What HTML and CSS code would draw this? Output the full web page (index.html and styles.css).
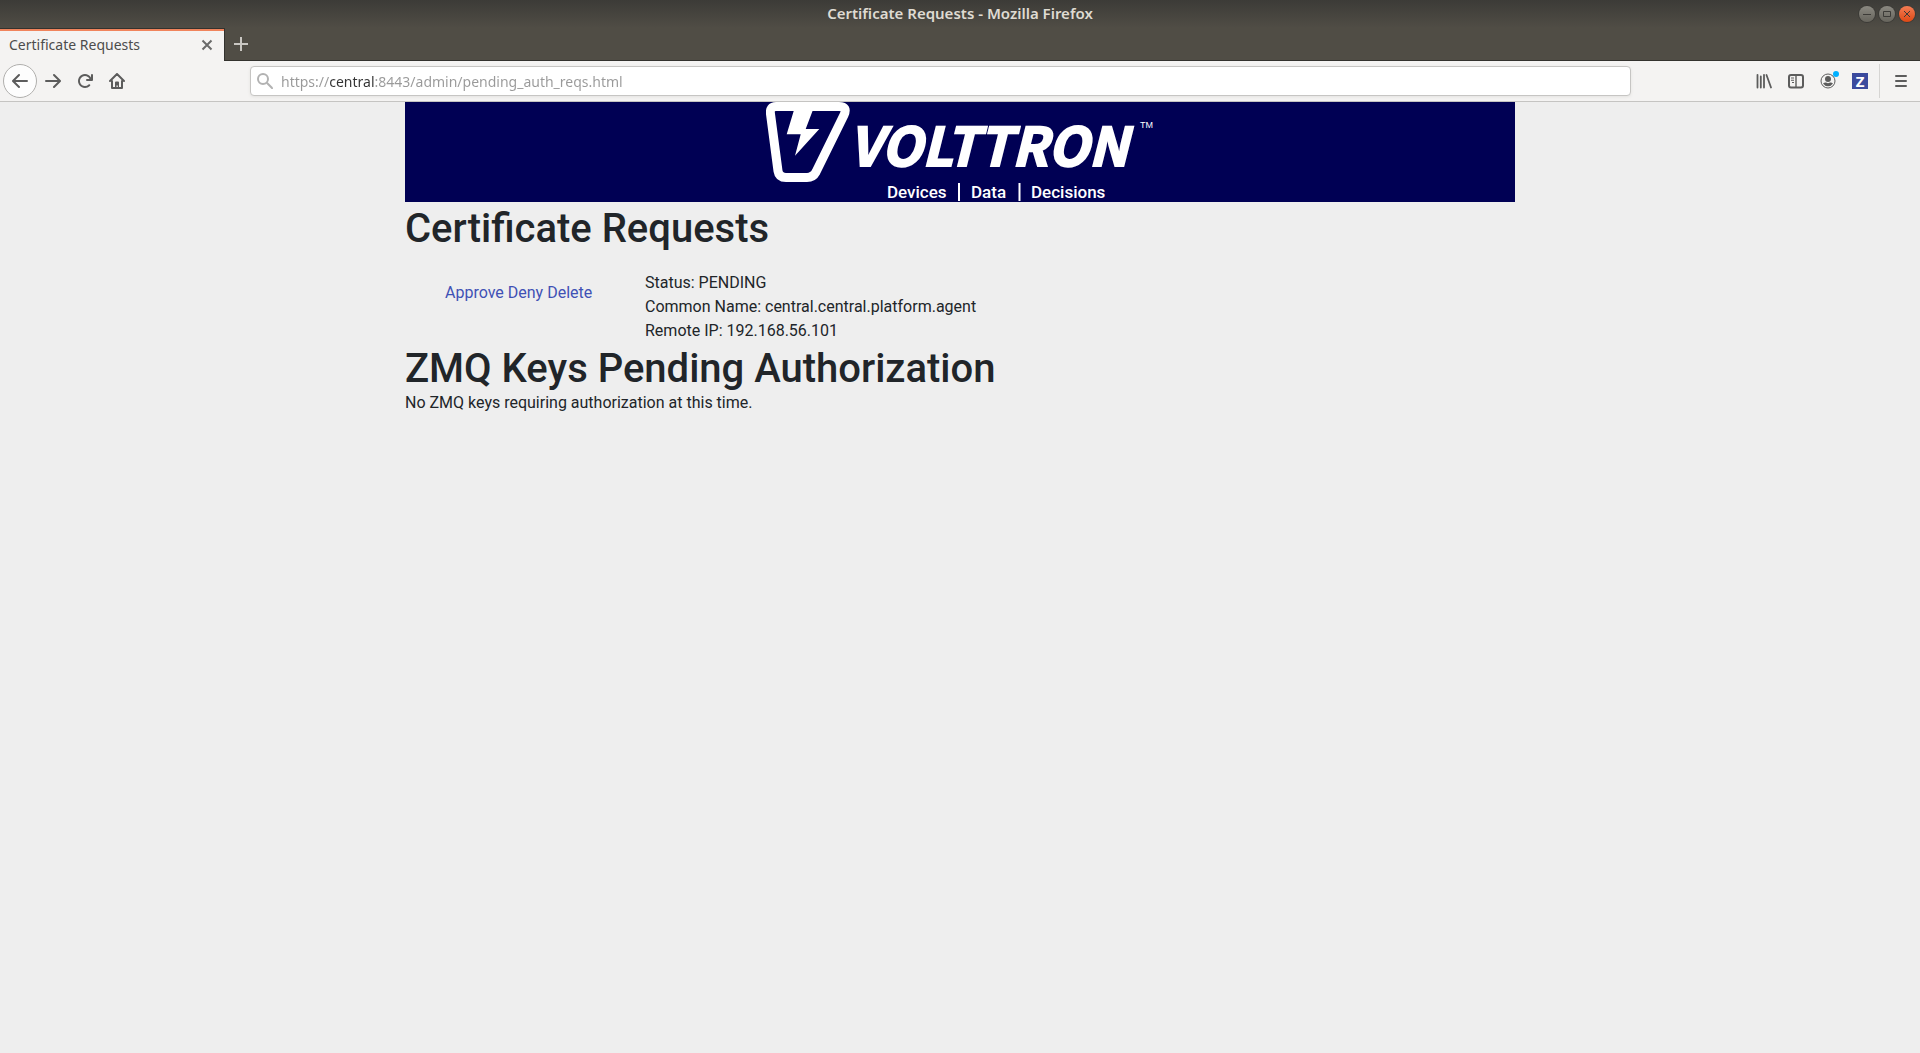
FILE: index.html
```html
<!DOCTYPE html>
<html lang="en">
<head>
<meta charset="utf-8">
<title>Certificate Requests</title>
<link rel="stylesheet" href="styles.css">
</head>
<body>
<header class="browser">
  <div class="titlebar">
    <span class="window-title">Certificate Requests - Mozilla Firefox</span>
    <div class="window-controls">
      <button class="control" aria-label="Minimize"><svg viewBox="0 0 16 16"><path d="M4 8.5h8"/></svg></button>
      <button class="control" aria-label="Maximize"><svg viewBox="0 0 16 16"><path d="M4.5 5.5h7v5h-7z"/></svg></button>
      <button class="control control-close" aria-label="Close window"><svg viewBox="0 0 16 16"><path d="M5 5l6 6M11 5l-6 6"/></svg></button>
    </div>
  </div>
  <div class="tabstrip">
    <div class="tab">
      <span class="tab-label">Certificate Requests</span>
      <button class="tab-close" aria-label="Close tab"><svg viewBox="0 0 16 16"><path d="M3.500 3.500l9 9M12.500 3.500l-9 9"/></svg></button>
    </div>
    <button class="tab-new" aria-label="New tab"><svg viewBox="0 0 14 14"><path d="M7 0v14M0 7h14"/></svg></button>
  </div>
  <nav class="toolbar" aria-label="Navigation">
    <div class="nav-buttons">
      <button class="tool tool-back" aria-label="Back"><svg class="icon" viewBox="0 0 16 16"><path d="M15 7H3.414l4.293-4.293a1 1 0 0 0-1.414-1.414l-6 6a1 1 0 0 0 0 1.414l6 6a1 1 0 0 0 1.414-1.414L3.414 9H15a1 1 0 0 0 0-2z"/></svg></button>
      <button class="tool" aria-label="Forward"><svg class="icon" viewBox="0 0 16 16"><path d="M15.707 7.293l-6-6a1 1 0 0 0-1.414 1.414L12.586 7H1a1 1 0 0 0 0 2h11.586l-4.293 4.293a1 1 0 1 0 1.414 1.414l6-6a1 1 0 0 0 0-1.414z"/></svg></button>
      <button class="tool" aria-label="Reload"><svg class="icon" viewBox="0 0 16 16"><path d="M15 1a1 1 0 0 0-1 1v2.418A6.995 6.995 0 1 0 8 15a6.954 6.954 0 0 0 4.950-2.050 1 1 0 0 0-1.414-1.414A5.019 5.019 0 1 1 12.549 6H10a1 1 0 0 0 0 2h5a1 1 0 0 0 1-1V2a1 1 0 0 0-1-1z"/></svg></button>
      <button class="tool" aria-label="Home"><svg class="icon" viewBox="0 0 16 16"><path fill="none" stroke="currentColor" stroke-width="2" stroke-linejoin="round" stroke-linecap="round" d="M1 8l7-7 7 7M3 8v7h10V8"/><path d="M6 15V9.500a1 1 0 0 1 1-1h2a1 1 0 0 1 1 1V15H8.800v-2.500H7.500V15z"/></svg></button>
    </div>
    <div class="urlbar">
      <svg class="search-icon" viewBox="0 0 16 16"><circle cx="6" cy="6" r="5"/><path d="M9.800 9.800l6 6"/></svg>
      <input class="url" type="text" aria-label="Address" value="https://central:8443/admin/pending_auth_reqs.html">
    </div>
    <div class="tool-buttons">
      <button class="tool" aria-label="Library"><svg class="icon" viewBox="0 0 16 16"><path fill="none" stroke="currentColor" stroke-width="1.800" stroke-linecap="round" d="M1.500 1.800v12.700M4.800 3.500v11M8 1.800v12.700M10.500 2l4.500 12.500"/></svg></button>
      <button class="tool" aria-label="Sidebars"><svg class="icon" viewBox="0 0 16 16"><rect x="1" y="2" width="14" height="12.500" rx="2" fill="none" stroke="currentColor" stroke-width="2"/><path d="M7.300 2h1.400v12H7.300zM3 4.500h3v1H3zM3 6.700h3v1H3zM4 9h2v1H4z"/></svg></button>
      <button class="tool tool-account" aria-label="Account"><svg class="icon" viewBox="0 0 16 16"><circle cx="8" cy="8" r="7" fill="none" stroke="currentColor" stroke-width="1"/><circle cx="8" cy="6" r="3"/><path d="M3 10.500q1.500-1.300 3-1l2 .7 2-.7q1.500-.3 3 1-1.800 2.700-5 2.700t-5-2.700z"/></svg></button>
      <button class="tool" aria-label="Zotero"><span class="zotero">Z</span></button>
    </div>
    <div class="menu"><button class="tool" aria-label="Open menu"><svg class="icon" viewBox="0 0 16 16"><path fill="none" stroke="currentColor" stroke-width="2" stroke-linecap="round" d="M3 3h10M3 8h10M3 13h10"/></svg></button></div>
  </nav>
</header>
<main class="container">
  <div class="banner">
    <svg class="logo" viewBox="0 0 388 100" role="img" aria-label="VOLTTRON">
      <path class="emblem" d="M10 4.500H73Q82 4.500 78 13L50 70Q47 75.500 41 75.500H20Q13 75.500 12 69L4.500 12Q3.500 4.500 10 4.500Z"/>
      <path class="bolt" d="M28.300 7H47.300L39.700 27H53.300L29 53.700L34.700 32.300H20.700Z"/>
      <text class="wordmark" x="83" y="64">VOLTTRON</text>
      <text class="trademark" x="374" y="26">TM</text>
      <path class="divider" d="M193 81v18M253.500 81v18"/>
      <text class="tagline" x="121" y="96">Devices</text>
      <text class="tagline" x="205" y="96">Data</text>
      <text class="tagline" x="265" y="96">Decisions</text>
    </svg>
  </div>
  <h1 class="heading">Certificate Requests</h1>
  <section class="request">
    <div class="actions"><a href="#approve">Approve</a> <a href="#deny">Deny</a> <a href="#delete">Delete</a></div>
    <div class="details">
      <div>Status: PENDING</div>
      <div>Common Name: central.central.platform.agent</div>
      <div>Remote IP: 192.168.56.101</div>
    </div>
  </section>
  <h1 class="heading">ZMQ Keys Pending Authorization</h1>
  <p class="note">No ZMQ keys requiring authorization at this time.</p>
</main>
</body>
</html>
```
FILE: styles.css
```css
* { box-sizing: border-box; }

body {
  margin: 0;
  min-height: 100vh;
  background: #eeeeee;
  color: #212529;
  font: 16px/24px Roboto, sans-serif;
}

button {
  padding: 0;
  border: 0;
  background: none;
  color: inherit;
  display: flex;
  align-items: center;
  justify-content: center;
}

svg { display: block; }

/* Browser window */
.browser {
  font-family: "Noto Sans", sans-serif;
  background: linear-gradient(#3c3b37, #504d45 28px);
}

.titlebar {
  display: grid;
  grid-template-columns: 1fr auto 1fr;
  align-items: center;
  height: 28px;
}

.window-title {
  grid-column: 2;
  padding-bottom: 2px;
  color: #dfdbd2;
  font-size: 15px;
  font-weight: 600;
  line-height: 26px;
}

.window-controls {
  display: flex;
  justify-content: flex-end;
  gap: 4px;
  padding-right: 5px;
}

.control {
  width: 16px;
  height: 16px;
  border-radius: 50%;
  background: linear-gradient(#8b8981, #66645c);
  box-shadow: 0 0 0 1px #3c3b37;
}

.control svg {
  width: 16px;
  height: 16px;
  fill: none;
  stroke: #3c3b37;
}

.control-close { background: linear-gradient(#f47d54, #dd4814); }

.tabstrip {
  display: flex;
  height: 33px;
  border-bottom: 1px solid #33322e;
}

.tab {
  display: flex;
  align-items: center;
  justify-content: space-between;
  width: 225px;
  height: 33px;
  padding: 0 9px;
  background: #f4f3f2;
  border-top: 1px solid #33322e;
  border-right: 1px solid #33322e;
  box-shadow: inset 0 2px #f0845c;
}

.tab-label {
  color: #4c4c4c;
  font-size: 14px;
  line-height: 20px;
}

.tab-close svg {
  width: 16px;
  height: 16px;
  fill: none;
  stroke: #6a6a6a;
  stroke-width: 2;
}

.tab-new { width: 32px; }

.tab-new svg {
  width: 14px;
  height: 14px;
  stroke: #c9c7c2;
  stroke-width: 2;
}

.toolbar {
  display: flex;
  align-items: center;
  height: 41px;
  background: #f4f3f2;
  border-bottom: 1px solid #c5c4c2;
}

.nav-buttons {
  display: flex;
  align-items: center;
  flex: 0 0 250px;
  padding-left: 3px;
}

.tool {
  width: 32px;
  height: 32px;
  color: #5c5c5c;
}

.icon {
  width: 16px;
  height: 16px;
  fill: currentColor;
}

.tool-back {
  width: 34px;
  height: 34px;
  border: 1px solid #b0afad;
  border-radius: 50%;
  background: #fdfdfd;
}

.urlbar {
  display: flex;
  align-items: center;
  flex: 1;
  height: 30px;
  padding-left: 6px;
  gap: 8px;
  background: #ffffff;
  border: 1px solid #c6c5c3;
  border-radius: 4px;
  box-shadow: 0 1px 3px #e3e2e0;
}

.search-icon {
  width: 16px;
  height: 16px;
  fill: none;
  stroke: #b2b2b2;
  stroke-width: 2;
}

/* The host name is drawn darker than the rest of the address */
.url {
  flex: 1;
  height: 28px;
  padding: 1px 0 0;
  border: 0;
  outline: 0;
  font: 14px/27px "Noto Sans", sans-serif;
  color: transparent;
  background: linear-gradient(90deg, #999999 48px, #333333 48px 94px, #999999 94px);
  background-clip: text;
}

.tool-buttons {
  display: flex;
  flex: 0 0 248px;
  justify-content: flex-end;
  padding-right: 3px;
}

.tool-account { position: relative; }

.tool-account::after {
  content: "";
  position: absolute;
  top: 6px;
  right: 5px;
  width: 6px;
  height: 6px;
  border-radius: 50%;
  background: #00b0ff;
}

.zotero {
  width: 16px;
  height: 16px;
  background: #3b4a9e;
  color: #ffffff;
  font: 700 15px/16px "Noto Sans", sans-serif;
}

.menu {
  flex: 0 0 41px;
  padding: 1px 0 1px 5px;
  border-left: 1px solid #d6d5d3;
}

/* Page */
.container {
  width: 100%;
  max-width: 1140px;
  margin: 0 auto;
  padding: 0 15px;
}

.banner {
  display: flex;
  justify-content: center;
  margin-bottom: 5px;
  background: #000054;
}

.logo {
  width: 388px;
  height: 100px;
  fill: #ffffff;
}

.emblem {
  fill: none;
  stroke: #ffffff;
  stroke-width: 9;
}

.wordmark {
  font: italic 700 53px "Noto Sans CJK JP", sans-serif;
  stroke: #ffffff;
  stroke-width: 2;
}

.trademark { font: 9px "Liberation Sans", sans-serif; }
.tagline { font: 500 17px Roboto, sans-serif; }

.divider {
  stroke: #ffffff;
  stroke-width: 2;
}

.heading {
  margin: 0;
  font-size: 40px;
  font-weight: 500;
  line-height: 44px;
}

.request {
  display: flex;
  padding: 20px 0 4px;
}

.actions {
  width: 240px;
  padding: 10px 40px;
}

.actions a {
  color: #3f51b5;
  text-decoration: none;
}

.note { margin: 0; }
```
